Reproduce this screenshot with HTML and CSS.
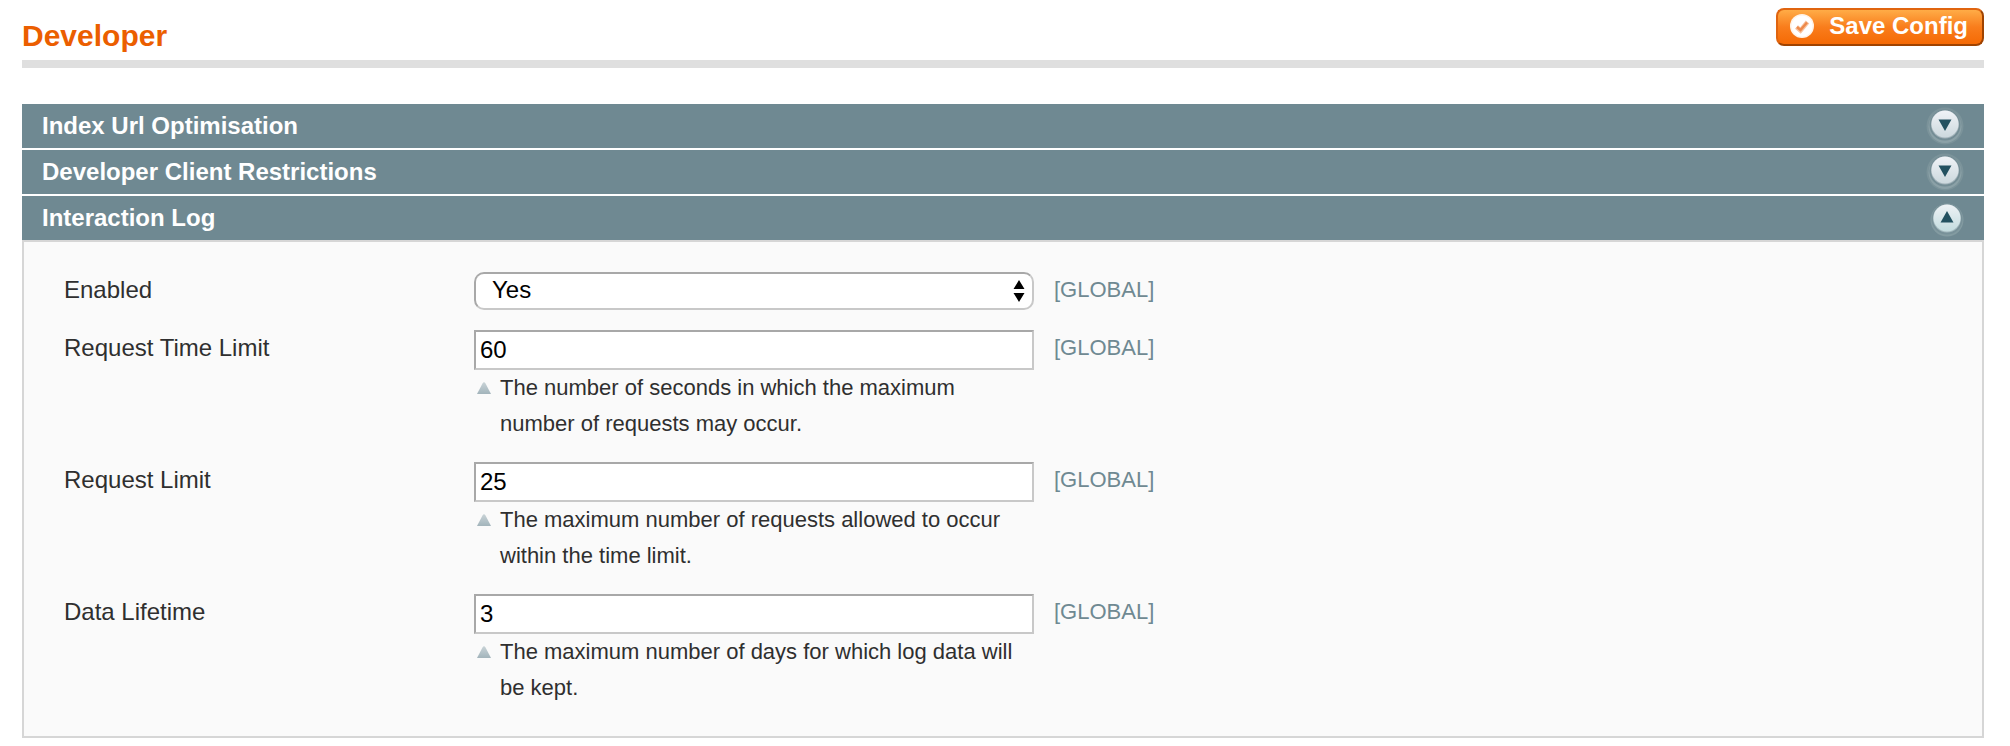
FILE: index.html
```html
<!DOCTYPE html>
<html lang="en">
<head>
<meta charset="utf-8">
<title>Developer</title>
<link rel="stylesheet" href="styles.css">
</head>
<body>
<svg class="defs" aria-hidden="true">
  <defs>
    <linearGradient id="knob" x1="0" y1="0" x2="0" y2="1">
      <stop offset="0" stop-color="#f0f3f7"/>
      <stop offset="1" stop-color="#ccd8dd"/>
    </linearGradient>
    <linearGradient id="knob-open" x1="0" y1="0" x2="0" y2="1">
      <stop offset="0" stop-color="#eef2f5"/>
      <stop offset="1" stop-color="#c3dcdf"/>
    </linearGradient>
    <linearGradient id="marker" x1="0" y1="0" x2="0" y2="1">
      <stop offset="0" stop-color="#c9d3d7"/>
      <stop offset="1" stop-color="#a2b4bb"/>
    </linearGradient>
    <symbol id="icon-closed" viewBox="0 0 44 44">
      <circle cx="22" cy="22" r="18.5" fill="#7b939a"/>
      <circle cx="22" cy="22.5" r="16.5" fill="#8ba1a7"/>
      <circle cx="22" cy="21" r="15.5" fill="#748d95"/>
      <circle cx="22" cy="20.500" r="14" fill="#a3b3ba"/>
      <circle cx="22" cy="20" r="13.5" fill="url(#knob)"/>
      <path d="M15.5 15.500h13L22 27z" fill="#235160"/>
    </symbol>
    <symbol id="icon-open" viewBox="0 0 44 44">
      <circle cx="24" cy="24" r="16.5" fill="#839ba1"/>
      <circle cx="24" cy="23" r="15.5" fill="#789199"/>
      <circle cx="24" cy="22.500" r="14" fill="#a3b8bd"/>
      <circle cx="24" cy="22" r="13.5" fill="url(#knob-open)"/>
      <path d="M17.500 26.500h13L24 15z" fill="#235160"/>
    </symbol>
    <symbol id="icon-note" viewBox="0 0 14 12">
      <path d="M0 12L5.500 1.500Q7-1 8.500 1.500L14 12z" fill="url(#marker)"/>
    </symbol>
  </defs>
</svg>

<main class="page">
  <header class="page-header">
    <h1 class="page-title">Developer</h1>
    <button class="save" type="submit" form="config">
      <svg class="save-icon" viewBox="0 0 24 24" aria-hidden="true">
        <circle cx="12" cy="12" r="12" fill="#fff3e8"/>
        <circle cx="12" cy="12" r="10.500" fill="#fff"/>
        <path d="M6.500 13l4 3.500L17.500 8" fill="none" stroke="#f8c4a0" stroke-width="4.500"/>
        <path d="M7 13l3.500 3L17 8.500" fill="none" stroke="#ee8a4c" stroke-width="2.500"/>
      </svg>
      <span>Save Config</span>
    </button>
  </header>

  <form class="sections" id="config">
    <h2 class="section-head"><button class="section-toggle" type="button" aria-expanded="false"><span>Index Url Optimisation</span><svg class="section-icon" aria-hidden="true"><use href="#icon-closed"/></svg></button></h2>
    <h2 class="section-head"><button class="section-toggle" type="button" aria-expanded="false"><span>Developer Client Restrictions</span><svg class="section-icon" aria-hidden="true"><use href="#icon-closed"/></svg></button></h2>
    <section class="section">
      <h2 class="section-head"><button class="section-toggle" type="button" aria-expanded="true" aria-controls="log"><span>Interaction Log</span><svg class="section-icon" aria-hidden="true"><use href="#icon-open"/></svg></button></h2>
      <div class="panel" id="log">
        <div class="row">
          <label class="label" for="enabled">Enabled</label>
          <div class="select-wrap">
            <select class="select" id="enabled"><option selected>Yes</option><option>No</option></select>
            <svg class="select-arrows" viewBox="0 0 12 22" aria-hidden="true"><path d="M6 0l5.500 9h-11zM6 22l5.500-9h-11z"/></svg>
          </div>
          <span class="scope">[GLOBAL]</span>
        </div>
        <div class="row">
          <label class="label" for="time-limit">Request Time Limit</label>
          <div class="field">
            <input class="input" id="time-limit" type="text" value="60" aria-describedby="time-note">
            <p class="note" id="time-note"><svg class="note-icon" aria-hidden="true"><use href="#icon-note"/></svg><span>The number of seconds in which the maximum number of requests may occur.</span></p>
          </div>
          <span class="scope">[GLOBAL]</span>
        </div>
        <div class="row">
          <label class="label" for="limit">Request Limit</label>
          <div class="field">
            <input class="input" id="limit" type="text" value="25" aria-describedby="limit-note">
            <p class="note" id="limit-note"><svg class="note-icon" aria-hidden="true"><use href="#icon-note"/></svg><span>The maximum number of requests allowed to occur within the time limit.</span></p>
          </div>
          <span class="scope">[GLOBAL]</span>
        </div>
        <div class="row">
          <label class="label" for="lifetime">Data Lifetime</label>
          <div class="field">
            <input class="input" id="lifetime" type="text" value="3" aria-describedby="lifetime-note">
            <p class="note" id="lifetime-note"><svg class="note-icon" aria-hidden="true"><use href="#icon-note"/></svg><span>The maximum number of days for which log data will be kept.</span></p>
          </div>
          <span class="scope">[GLOBAL]</span>
        </div>
      </div>
    </section>
  </form>
</main>
</body>
</html>
```

FILE: styles.css
```css
* {
  box-sizing: border-box;
}

body {
  margin: 0;
  background: #fff;
  color: #2f2f2f;
  font-family: "Liberation Sans", Arial, Helvetica, sans-serif;
  font-size: 24px;
  line-height: 36px;
}

button,
input,
select {
  margin: 0;
  font-family: inherit;
  font-size: 24px;
}

.defs {
  position: absolute;
  width: 0;
  height: 0;
}

.page {
  padding: 8px 26px 8px 22px;
}

.page-header {
  display: flex;
  align-items: flex-start;
  justify-content: space-between;
  padding-bottom: 7px;
  border-bottom: 8px solid #dfdfdf;
}

.page-title {
  margin: 0;
  padding-top: 11px;
  color: #eb5e00;
  font-size: 30px;
  line-height: 34px;
}

.save {
  display: flex;
  align-items: center;
  gap: 15px;
  height: 38px;
  padding: 0 14px 2px 12px;
  border: 2px solid;
  border-color: #e0640f #a04300 #a04300 #e0640f;
  border-radius: 8px;
  background: linear-gradient(#ffac47, #f97d1c 50%, #f56a05);
  color: #fff;
  font-weight: bold;
  line-height: 28px;
}

.save-icon {
  width: 24px;
  height: 24px;
}

.sections {
  display: flex;
  flex-direction: column;
  gap: 2px;
  margin-top: 36px;
}

.section-head {
  margin: 0;
  font-size: 24px;
}

.section-toggle {
  display: flex;
  align-items: center;
  justify-content: space-between;
  width: 100%;
  height: 44px;
  padding: 0 17px 0 20px;
  border: 0;
  background: #6f8992;
  color: #fff;
  font-weight: bold;
}

.section-icon {
  width: 44px;
  height: 44px;
}

.panel {
  display: flex;
  flex-direction: column;
  gap: 20px;
  padding: 30px 40px;
  border: 2px solid #d6d6d6;
  background: #fafafa;
}

.row {
  display: grid;
  grid-template-columns: 390px 560px 1fr;
  column-gap: 20px;
  align-items: start;
}

.select-wrap {
  position: relative;
}

.select,
.input {
  display: block;
  width: 100%;
  border: 2px solid;
  border-color: #a8a8a8 #c8c8c8 #c8c8c8 #a8a8a8;
  background: #fff;
  color: #000;
}

.select {
  height: 38px;
  padding: 0 40px 3px 16px;
  border-radius: 10px;
  appearance: none;
}

.select-arrows {
  position: absolute;
  top: 8px;
  right: 9px;
  width: 12px;
  height: 22px;
  pointer-events: none;
}

.input {
  height: 40px;
  padding: 0 4px;
  border-radius: 0;
}

.note {
  display: flex;
  gap: 9px;
  margin: 0;
  padding-left: 3px;
  font-size: 22px;
}

.note-icon {
  flex: none;
  width: 14px;
  height: 12px;
  margin-top: 12px;
}

.scope {
  color: #6f8992;
  font-size: 22px;
}
```
